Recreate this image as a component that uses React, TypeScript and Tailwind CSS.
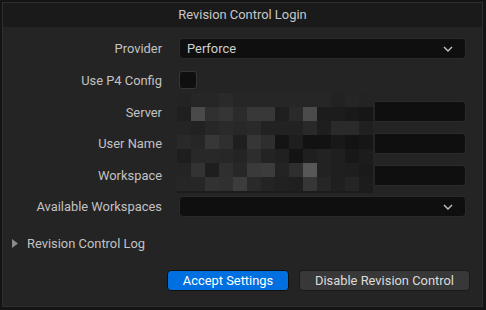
import React from 'react';

// pixelated privacy mask over the server / user / workspace values
const mosaic: string[][] = [
  ['#232323', '#262626', '#262626', '#2a2a2a', '#262626', '#262626', '#262626', '#262626', '#262626', '#262626', '#262626', '#222222', '#252525', '#232323'],
  ['#1f1f1f', '#4a4a4a', '#303030', '#353535', '#2b2b2b', '#383838', '#383838', '#1f1f1f', '#2a2a2a', '#4b4b4b', '#1c1c1c', '#1c1c1c', '#191919', '#161616'],
  ['#242424', '#222222', '#272727', '#2a2a2a', '#282828', '#2a2a2a', '#222222', '#222222', '#222222', '#292929', '#1e1e1e', '#2a2a2a', '#2a2a2a', '#202020'],
  ['#292929', '#262626', '#373737', '#2f2f2f', '#1f1f1f', '#363636', '#2e2e2e', '#141414', '#1e1e1e', '#121212', '#121212', '#181818', '#131313', '#161616'],
  ['#1e1e1e', '#282828', '#282828', '#272727', '#242424', '#2d2d2d', '#232323', '#202020', '#141414', '#1f1f1f', '#222222', '#1f1f1f', '#181818', '#1c1c1c'],
  ['#242424', '#333333', '#1e1e1e', '#2f2f2f', '#272727', '#3a3a3a', '#3c3c3c', '#232323', '#2e2e2e', '#575757', '#222222', '#1f1f1f', '#1e1e1e', '#1a1a1a'],
  ['#262626', '#262626', '#323232', '#303030', '#3c3c3c', '#2a2a2a', '#242424', '#212121', '#1f1f1f', '#363636', '#262626', '#1f1f1f', '#252525', '#1c1c1c'],
];

const Chevron = () => (
  <svg width="10" height="6" viewBox="0 0 10 6" className="text-[#c4c4c4]">
    <polyline points="1,1 5,5 9,1" fill="none" stroke="currentColor" strokeWidth="1.4" />
  </svg>
);

const Row: React.FC<{ label: string; children: React.ReactNode }> = ({ label, children }) => (
  <div className="h-[31.6px] flex items-center">
    <div className="w-[159px] pt-[2px] text-right text-[#c2c2c2]">{label}</div>
    <div className="ml-[17px] w-[287px] flex items-center">{children}</div>
  </div>
);

const Dropdown: React.FC<{ value?: string }> = ({ value }) => (
  <div className="w-full h-[21px] bg-[#0f0f0f] border border-[#2a2a2a] rounded-[4px] flex items-center justify-between pl-[7px] pr-[12px] text-[#cfcfcf]">
    <span className="pt-[2px]">{value}</span>
    <Chevron />
  </div>
);

const TextField = () => (
  <div className="w-full h-[21px] bg-[#0f0f0f] border border-[#2a2a2a] rounded-[4px]" />
);

export default function App() {
  return (
    <div className="w-[486px] h-[310px] bg-[#141414] pt-[2px] pl-[2px] overflow-hidden" style={{ fontFamily: 'Roboto, "Noto Sans", sans-serif' }}>
      <div className="relative w-[481px] h-[305px] border border-[#2e2e2e] bg-[#242424] flex flex-col text-[12.9px] leading-none">
        <div className="h-[24px] pt-[1px] bg-[#1a1a1a] flex items-center justify-center text-[#c8c8c8]">
          Revision Control Login
        </div>

        <div className="pt-[6px] flex flex-col">
          <Row label="Provider">
            <Dropdown value="Perforce" />
          </Row>
          <Row label="Use P4 Config">
            <div className="w-[18px] h-[18px] bg-[#0f0f0f] border border-[#363636] rounded-[3px]" />
          </Row>
          <Row label="Server">
            <TextField />
          </Row>
          <Row label="User Name">
            <TextField />
          </Row>
          <Row label="Workspace">
            <TextField />
          </Row>
          <Row label="Available Workspaces">
            <Dropdown />
          </Row>
        </div>

        <div className="mt-[11px] h-[20px] flex items-center pl-[9px] text-[#c2c2c2]">
          <svg width="6" height="9" viewBox="0 0 6 9">
            <polygon points="0,0 6,4.5 0,9" fill="#8a8a8a" />
          </svg>
          <span className="ml-[9px] pt-[2px]">Revision Control Log</span>
        </div>

        <div className="mt-[16px] flex justify-end gap-[10px] pr-[12px]">
          <button className="w-[122px] h-[21px] pt-[2px] bg-[#0070e0] border border-[#0f0f0f] rounded-[4px] text-white">
            Accept Settings
          </button>
          <button className="w-[171px] h-[21px] pt-[2px] bg-[#383838] border border-[#1a1a1a] rounded-[4px] text-[#dcdcdc]">
            Disable Revision Control
          </button>
        </div>

        {/* mosaic mask */}
        <div className="absolute left-[174px] top-[90px] w-[198px] bg-[#242424]">
          <div className="grid grid-cols-[repeat(14,14px)]">
            {mosaic.flatMap((row, r) =>
              row.map((c, i) => <div key={`${r}-${i}`} className="h-[14px]" style={{ backgroundColor: c }} />)
            )}
          </div>
          <div className="h-[2px] w-[196px] bg-[#1c1c1c]" />
        </div>
      </div>
    </div>
  );
}
